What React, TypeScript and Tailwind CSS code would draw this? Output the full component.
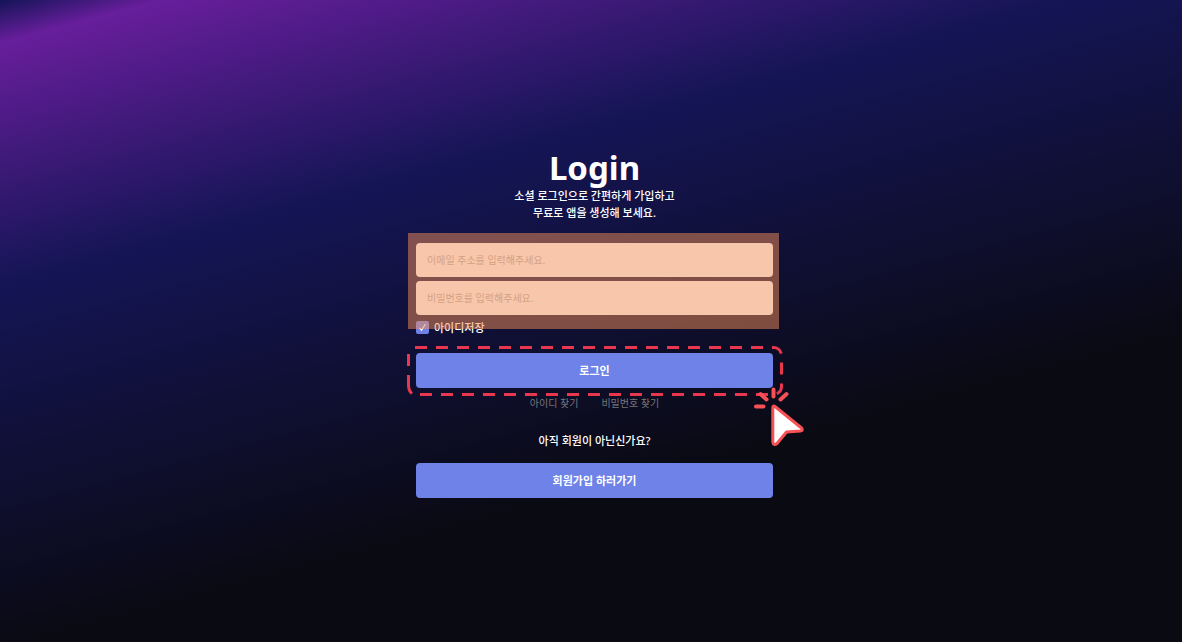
import { useState } from "react";

function DashedOutline() {
  return (
    <svg
      className="pointer-events-none absolute -left-[9px] -top-[7px] h-[50px] w-[376px]"
      viewBox="0 0 376 50"
      fill="none"
      stroke="#e8374f"
      strokeWidth="3"
      aria-hidden="true"
    >
      <path
        d="M8 1.5H366.500A8 8 0 0 1 374.500 9.500V40.500A8 8 0 0 1 366.500 48.500H13"
        strokeDasharray="12 9"
      />
      <path d="M5 47.500Q1.500 45 1.500 39V29M1.500 20V8" />
    </svg>
  );
}

function ClickPointer() {
  return (
    <svg
      className="pointer-events-none absolute left-[336px] top-[32px] h-[64px] w-[54px]"
      viewBox="0 0 54 64"
      fill="none"
      stroke="#f65154"
      aria-hidden="true"
    >
      <path
        d="M21.500 4.500V11.500M34.500 9L28.500 14.500M8.500 9L14.500 14.500M4 21.500H11.500"
        strokeWidth="4"
        strokeLinecap="round"
      />
      <path
        d="M20.800 22.500Q21 20 23 21.500L49.500 43Q51.500 45.500 48.500 46L34.500 47L25 58.500Q21.500 61 20.800 57Z"
        fill="#fff"
        strokeWidth="3"
        strokeLinejoin="round"
      />
    </svg>
  );
}

const field =
  "block h-[34px] w-full rounded bg-white px-[11px] text-[10px] text-gray-800 outline-none placeholder:text-[#b4b4b4]";
const action =
  "block h-[35px] w-full cursor-pointer rounded bg-[#6e82e8] text-[11px] font-bold text-white";

export default function App() {
  const [remember, setRemember] = useState(true);

  return (
    <main className="flex min-h-screen flex-col items-center justify-center bg-[linear-gradient(165deg,#141457_0%,#671e9b_4.5%,#151556_29.5%,#0a0a13_68%)] pl-[7px] pt-1 font-['Noto_Sans','Noto_Sans_CJK_KR',sans-serif] text-[11px] leading-[17px] text-white">
      <div className="w-full max-w-[357px]">
        <header className="text-center">
          <h1 className="text-[33px] font-bold leading-[38px]">Login</h1>
          <p className="font-medium">
            소셜 로그인으로 간편하게 가입하고
            <br />
            무료로 앱을 생성해 보세요.
          </p>
        </header>

        <form onSubmit={(e) => e.preventDefault()}>
          <div className="relative mt-[22px]">
            <div className="flex flex-col gap-1">
              <input className={field} type="email" aria-label="이메일 주소" placeholder="이메일 주소를 입력해주세요." />
              <input className={field} type="password" aria-label="비밀번호" placeholder="비밀번호를 입력해주세요." />
            </div>
            <div className="mt-1 flex items-center gap-[5px]">
              <span className="grid size-[13px] place-items-center">
                <input
                  id="remember"
                  type="checkbox"
                  checked={remember}
                  onChange={(e) => setRemember(e.target.checked)}
                  className="col-start-1 row-start-1 size-[13px] appearance-none rounded-xs bg-white checked:bg-[#6e82e8]"
                />
                <svg
                  className="pointer-events-none col-start-1 row-start-1 size-[13px]"
                  viewBox="0 0 13 13"
                  fill="none"
                  stroke="#fff"
                  strokeWidth="1.2"
                  aria-hidden="true"
                >
                  <path d="M3.500 6.800L5.500 9.300L9.500 3" />
                </svg>
              </span>
              <label htmlFor="remember" className="font-medium">
                아이디저장
              </label>
            </div>
            <div className="pointer-events-none absolute -left-2 -right-[6px] -top-[10px] h-24 bg-[#f18d55]/50" />
          </div>

          <div className="relative mt-[17px]">
            <button type="submit" className={action}>
              로그인
            </button>
            <DashedOutline />
            <ClickPointer />
          </div>
        </form>

        <nav className="mt-[7px] flex justify-center gap-[23px] text-[10px] text-[#77777c]">
          <a href="#find-id">아이디 찾기</a>
          <a href="#find-password">비밀번호 찾기</a>
        </nav>

        <p className="mt-5 text-center font-medium">아직 회원이 아닌신가요?</p>
        <button type="button" className={`${action} mt-[14px]`}>
          회원가입 하러가기
        </button>
      </div>
    </main>
  );
}
